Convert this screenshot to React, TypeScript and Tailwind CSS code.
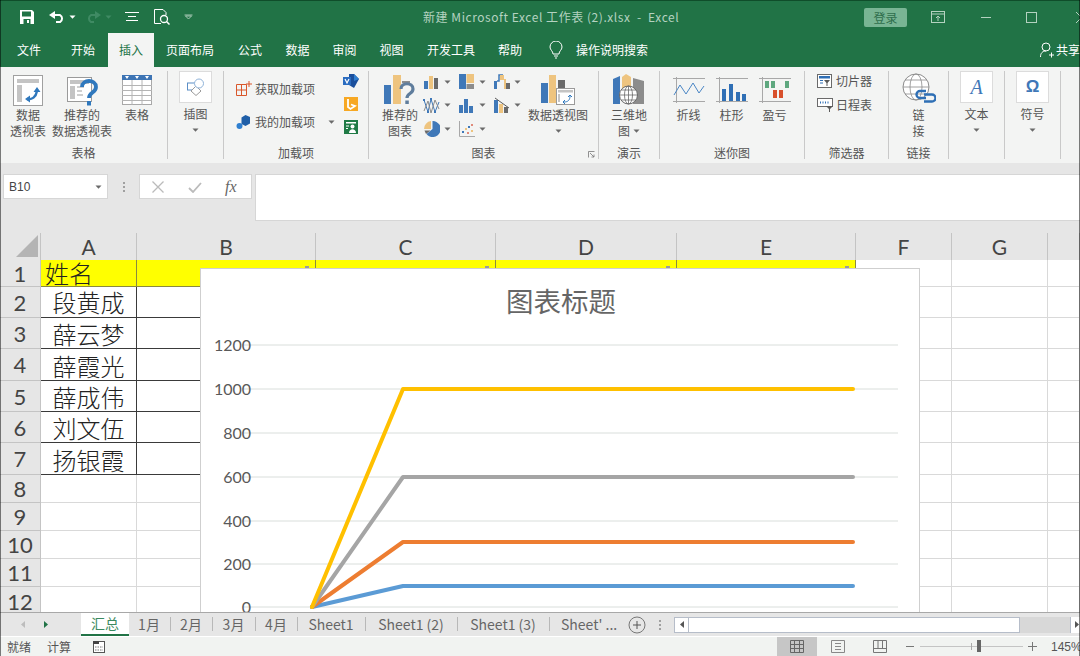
import type { FC, ReactNode } from 'react';

const cjk = "font-['Noto_Sans_CJK_SC','Liberation_Sans',sans-serif]";

const Caret: FC<{ className?: string }> = ({ className = '' }) => (
  <svg width="7" height="4" viewBox="0 0 7 4" className={className}>
    <path d="M0.5 0.5h6L3.5 3.8z" fill="#6a6a6a" />
  </svg>
);

// 功能区图标
const PivotIcon = () => (
  <svg width="30" height="31" viewBox="0 0 30 31">
    <rect x="0.5" y="0.5" width="29" height="30" fill="#fff" stroke="#a0a0a0" />
    <rect x="4" y="4" width="22" height="4" fill="#c4c4c4" />
    <rect x="4" y="10" width="5" height="17" fill="#c4c4c4" />
    <path d="M14 24c5 1 9-2 10-8" fill="none" stroke="#2f78bd" strokeWidth="2.4" />
    <path d="M20.500 17l3.500-5 3.500 5zM17 20.500l-5 3.500 5 3.500z" fill="#2f78bd" />
  </svg>
);
const RecPivotIcon = () => (
  <svg width="31" height="31" viewBox="0 0 31 31">
    <rect x="0.5" y="2.500" width="24" height="24" fill="#fff" stroke="#9a9a9a" />
    <rect x="3" y="5" width="19" height="4" fill="#c4c4c4" />
    <rect x="3" y="11" width="5" height="13" fill="#c4c4c4" />
    <path d="M10 12h7M10 16h5M10 20h6" stroke="#cfcfcf" strokeWidth="2" />
    <path d="M15 12c0-8 14-8 14 0 0 6-7 5-7 11" fill="none" stroke="#2f78bd" strokeWidth="3.800" />
    <rect x="20" y="26" width="4" height="4.500" fill="#2f78bd" />
  </svg>
);
const TableIcon = () => (
  <svg width="30" height="30" viewBox="0 0 30 30">
    <rect x="0.5" y="0.5" width="29" height="29" fill="#fff" stroke="#a8a8a8" />
    <rect x="0" y="0" width="30" height="5" fill="#3d74b4" />
    <path d="M0 10.500h30M0 15.500h30M0 20.500h30M0 25.500h30M10 5v25M20 5v25" stroke="#b4b4b4" />
    <path d="M3 1h4L5 4zM13 1h4l-2 3zM23 1h4l-2 3z" fill="#fff" />
  </svg>
);
const IllustrationIcon = () => (
  <svg width="18" height="18" viewBox="0 0 18 18">
    <rect x="0.5" y="5" width="8" height="7" fill="none" stroke="#5b8ec6" />
    <path d="M9 8l5 5-5 4.500-5-4.500z" fill="#fff" stroke="#9a9a9a" />
    <circle cx="12" cy="5.500" r="4.500" fill="#fff" stroke="#8fb3d9" />
  </svg>
);
const GetAddinIcon = () => (
  <svg width="16" height="16" viewBox="0 0 16 16">
    <path d="M0.5 3.500h10v11h-10zM0.5 9h10M5.500 3.500v11" fill="none" stroke="#d9572b" />
    <path d="M13 0v6M10 3h6" stroke="#d9572b" />
  </svg>
);
const MyAddinIcon = () => (
  <svg width="15" height="15" viewBox="0 0 15 15">
    <path d="M5.500 2.500l4-2.500 4.500 2v6.500l-4.500 2.500-4-2z" fill="#1f5fa8" />
    <circle cx="3.500" cy="11" r="3" fill="#2f7fd0" />
  </svg>
);
const VisioIcon = () => (
  <svg width="16" height="14" viewBox="0 0 16 14">
    <path d="M6 0h5l5 5-5 9-5-3z" fill="#1b4f9c" />
    <path d="M11 0l5 5-5 2z" fill="#2f7fd0" />
    <rect x="0" y="3" width="8" height="8" fill="#2a6cc0" />
    <path d="M2 5l2 4 2-4" fill="none" stroke="#fff" strokeWidth="1.200" />
  </svg>
);
const BingIcon = () => (
  <svg width="14" height="14" viewBox="0 0 14 14">
    <rect width="14" height="14" fill="#f7a823" />
    <path d="M4 2v8l2.500 2 4.500-3-4-1.500" fill="none" stroke="#fff" strokeWidth="1.800" />
  </svg>
);
const PeopleIcon = () => (
  <svg width="14" height="14" viewBox="0 0 14 14">
    <rect width="14" height="14" fill="#1f7a45" />
    <rect x="2" y="2" width="10" height="1.500" fill="#fff" />
    <circle cx="8.500" cy="6.500" r="2" fill="#fff" />
    <path d="M5 13c0-5 7-5 7 0z" fill="#fff" />
    <path d="M2 6h3M2 8.500h2" stroke="#fff" />
  </svg>
);
const RecChartIcon = () => (
  <svg width="32" height="32" viewBox="0 0 32 32">
    <rect x="0" y="11" width="7" height="19" fill="#3f78b8" />
    <rect x="9" y="1" width="8" height="29" fill="#eec47f" />
    <rect x="18" y="7" width="8" height="2" fill="#8c8c8c" />
    <path d="M17 15c0-7 12-7 12 0 0 5-6 4-6 9" fill="none" stroke="#5f7d9c" strokeWidth="3.200" />
    <rect x="21.300" y="26.500" width="3.500" height="3.500" fill="#5f7d9c" />
  </svg>
);
const MiniBar: FC<{ bars: [string, number][] }> = ({ bars }) => (
  <svg width="15" height="15" viewBox="0 0 15 15">
    {bars.map(([c, v], i) => (
      <rect key={i} x={i * 5} y={15 - v} width="4" height={v} fill={c} />
    ))}
  </svg>
);
const TreemapIcon = () => (
  <svg width="15" height="15" viewBox="0 0 15 15">
    <rect width="7" height="15" fill="#3f78b8" />
    <rect x="7.500" width="7.500" height="9" fill="#eec47f" />
    <rect x="7.500" y="10" width="7.500" height="5" fill="#8c8c8c" />
  </svg>
);
const WaterfallIcon = () => (
  <svg width="16" height="15" viewBox="0 0 16 15">
    <rect x="0" y="7" width="3" height="8" fill="#3f78b8" />
    <path d="M3 7h2V1h4" fill="none" stroke="#3f78b8" strokeWidth="1.500" />
    <rect x="6" y="1" width="4" height="5" fill="#eec47f" />
    <rect x="10" y="5" width="2" height="10" fill="#eec47f" />
    <rect x="12" y="9" width="4" height="6" fill="#6a6a6a" />
  </svg>
);
const ScatterLines = () => (
  <svg width="17" height="17" viewBox="0 0 17 17">
    <path d="M1 3l4 12 3-13 4 13 4-10" fill="none" stroke="#3f78b8" />
    <path d="M1 14l4-10 3 12 4-13 4 9" fill="none" stroke="#8c8c8c" />
    <path d="M0 2h2v2H0zM7 1h2v2H7zM4 14h2v2H4zM11 14h2v2h-2z" fill="#3f78b8" />
  </svg>
);
const ParetoIcon = () => (
  <svg width="16" height="16" viewBox="0 0 16 16">
    <rect x="0" y="3" width="4" height="13" fill="#3f78b8" />
    <rect x="5" y="7" width="4" height="9" fill="#eec47f" />
    <rect x="10" y="10" width="4" height="6" fill="#6a6a6a" />
    <path d="M1 1l7 5 7 5" fill="none" stroke="#5a5a5a" />
  </svg>
);
const PieIcon = () => (
  <svg width="16" height="16" viewBox="0 0 16 16">
    <path d="M8.500 0a8 8 0 1 1-6 13l6-5z" fill="#3f78b8" />
    <path d="M7 0a8 8 0 0 0-7 8h7z" fill="#eec47f" />
    <path d="M0.500 9.500h6l-4.500 3.500z" fill="#6a6a6a" />
  </svg>
);
const ScatterIcon = () => (
  <svg width="16" height="16" viewBox="0 0 16 16">
    <path d="M0.500 0v15.500H16" fill="none" stroke="#a8a8a8" />
    <path d="M3 10h2v2H3zM9 5h2v2H9z" fill="#3f78b8" />
    <path d="M6 7h2v2H6zM12 9h2v2h-2z" fill="#eec47f" />
    <path d="M12 3h2v2h-2zM8 11h2v2H8z" fill="#e08a7a" />
  </svg>
);
const PivotChartIcon = () => (
  <svg width="34" height="32" viewBox="0 0 34 32">
    <rect x="0" y="9" width="7" height="20" fill="#3f78b8" />
    <rect x="8" y="1" width="7" height="28" fill="#eec47f" />
    <rect x="17" y="6" width="7" height="10" fill="#6a6a6a" />
    <rect x="15.500" y="14.500" width="18" height="16" fill="#fff" stroke="#9a9a9a" />
    <rect x="17" y="16" width="15" height="2.500" fill="#c4c4c4" />
    <path d="M18 20v8" stroke="#c4c4c4" strokeWidth="2" />
    <path d="M23 28c4 0 6-2 6-6M27 23l2-2 2 2M24 26l-2 2 2 2" fill="none" stroke="#2f78bd" />
  </svg>
);
const MapIcon = () => (
  <svg width="32" height="32" viewBox="0 0 32 32">
    <path d="M0 5l7-3v28H0z" fill="#3f78b8" />
    <path d="M9 3l4-3 5 3v12H9z" fill="#eec47f" />
    <path d="M20 4l11 3v23H20z" fill="#8c8c8c" />
    <circle cx="15.500" cy="21" r="9" fill="#fff" stroke="#6a6a6a" />
    <path d="M6.500 21h18M15.500 12v18M8.500 16h14M8.500 26h14" stroke="#6a6a6a" strokeWidth="0.8" />
    <ellipse cx="15.500" cy="21" rx="4" ry="9" fill="none" stroke="#6a6a6a" strokeWidth="0.8" />
  </svg>
);
const Spark: FC<{ children: ReactNode }> = ({ children }) => (
  <svg width="32" height="26" viewBox="0 0 32 26">
    <path d="M0 1.500h32M0 24.500h32M3.500 0v26" stroke="#a8a8a8" />
    {children}
  </svg>
);
const SlicerIcon = () => (
  <svg width="15" height="14" viewBox="0 0 15 14">
    <rect x="0.5" y="0.5" width="14" height="13" fill="#fff" stroke="#6a6a6a" />
    <rect x="2" y="2" width="11" height="2.500" fill="#2f6fb5" />
    <path d="M3 6.500h3M3 9h3" stroke="#2f6fb5" />
    <path d="M7 6h6l-2.500 3v3h-1V9z" fill="#5a5a5a" />
  </svg>
);
const TimelineIcon = () => (
  <svg width="17" height="14" viewBox="0 0 17 14">
    <rect x="0.5" y="0.5" width="15" height="8" fill="#fff" stroke="#6a6a6a" />
    <path d="M3 4.500h1M5.500 4.500h1M8 4.500h1M10.500 4.500h1" stroke="#2f6fb5" strokeWidth="2" />
    <path d="M9 8h7l-3 3v3h-1v-3z" fill="#5a5a5a" />
  </svg>
);
const LinkIcon = () => (
  <svg width="34" height="34" viewBox="0 0 34 34">
    <circle cx="14" cy="14" r="13" fill="#fff" stroke="#8c8c8c" />
    <ellipse cx="14" cy="14" rx="6" ry="13" fill="none" stroke="#8c8c8c" strokeWidth="0.8" />
    <path d="M1 14h26M3 7h22M3 21h22" stroke="#8c8c8c" strokeWidth="0.8" />
    <path d="M24 25h-6a3.500 3.500 0 0 1 0-7h6M22 21.500h8a3.500 3.500 0 0 1 0 7h-8" fill="none" stroke="#2f6fb5" strokeWidth="2.400" />
  </svg>
);

const Sep = () => <div className="w-px h-[88px] mt-[4px] bg-[#c9c9c9] shrink-0" />;

const Group: FC<{ w: number; label?: string; children: ReactNode }> = ({ w, label, children }) => (
  <div className="relative flex flex-col shrink-0 h-full" style={{ width: w }}>
    <div className="flex flex-1 min-h-0">{children}</div>
    <div className="h-[19px] text-center leading-[17px] text-[12px] text-[#555]">{label}</div>
  </div>
);

const Big: FC<{ w: number; icon: ReactNode; lines: string[]; caret?: boolean; boxed?: boolean }> = ({
  w,
  icon,
  lines,
  caret,
  boxed,
}) => (
  <div className="flex flex-col items-center shrink-0" style={{ width: w }}>
    {boxed ? (
      <div className="w-[33px] h-[32px] mt-[4px] bg-white border border-[#dcdcdc] flex items-center justify-center">{icon}</div>
    ) : (
      <div className="h-[34px] mt-[6px] flex items-center justify-center">{icon}</div>
    )}
    <div className={boxed ? 'mt-[3px]' : ''}>
      {lines.map((l) => (
        <div key={l} className="text-[12px] leading-[16px] text-[#555] text-center whitespace-nowrap">
          {l}
        </div>
      ))}
    </div>
    {caret && <Caret className="mt-[6px]" />}
  </div>
);

const ChartBtn: FC<{ icon: ReactNode }> = ({ icon }) => (
  <div className="flex items-center w-[35px] h-[23.5px] gap-[4px]">
    <div className="w-[17px] flex justify-center">{icon}</div>
    <Caret />
  </div>
);

const Ribbon = () => (
  <div className={`flex h-[96px] bg-[#f3f4f3] shrink-0 ${cjk}`}>
    <Group w={167} label="表格">
      <div className="pl-[5px] flex">
        <Big w={46} icon={<PivotIcon />} lines={['数据', '透视表']} />
        <Big w={62} icon={<RecPivotIcon />} lines={['推荐的', '数据透视表']} />
        <Big w={48} icon={<TableIcon />} lines={['表格']} />
      </div>
    </Group>
    <Sep />
    <Group w={55}>
      <Big w={55} boxed icon={<IllustrationIcon />} lines={['插图']} caret />
    </Group>
    <Sep />
    <Group w={144} label="加载项">
      <div className="pl-[12px] pt-[12px] w-[117px] shrink-0">
        <div className="flex items-center gap-[3px] h-[20px] whitespace-nowrap text-[12px] text-[#555]">
          <GetAddinIcon />
          获取加载项
        </div>
        <div className="flex items-center gap-[4px] h-[20px] mt-[13px] whitespace-nowrap text-[12px] text-[#555]">
          <MyAddinIcon />
          我的加载项
          <Caret className="ml-[9px]" />
        </div>
      </div>
      <div className="pl-[2px] pt-[7px] flex flex-col gap-[9px] items-center">
        <VisioIcon />
        <BingIcon />
        <PeopleIcon />
      </div>
    </Group>
    <Sep />
    <Group w={229} label="图表">
      <div className="pl-[8px]">
        <Big w={46} icon={<RecChartIcon />} lines={['推荐的', '图表']} />
      </div>
      <div className="grid grid-cols-3 mt-[3px] h-fit w-[105px] shrink-0">
        <ChartBtn icon={<MiniBar bars={[['#3f78b8', 8], ['#eec47f', 13], ['#6a6a6a', 11]]} />} />
        <ChartBtn icon={<TreemapIcon />} />
        <ChartBtn icon={<WaterfallIcon />} />
        <ChartBtn icon={<ScatterLines />} />
        <ChartBtn icon={<MiniBar bars={[['#3f78b8', 8], ['#3f78b8', 14], ['#3f78b8', 7]]} />} />
        <ChartBtn icon={<ParetoIcon />} />
        <ChartBtn icon={<PieIcon />} />
        <ChartBtn icon={<ScatterIcon />} />
      </div>
      <Big w={60} icon={<PivotChartIcon />} lines={['数据透视图']} caret />
      <svg width="7" height="7" viewBox="0 0 7 7" className="absolute right-[3px] bottom-[5px]">
        <path d="M0.500 6.500V0.500h6M2 2l4 4M6 3.500V6H3.500" fill="none" stroke="#777" strokeWidth="0.8" />
      </svg>
    </Group>
    <Sep />
    <Group w={60} label="演示">
      <div className="flex flex-col items-center w-full">
        <div className="h-[34px] mt-[6px] flex items-center justify-center">
          <MapIcon />
        </div>
        <div className="text-[12px] leading-[16px] text-[#555]">三维地</div>
        <div className="flex items-center gap-[3px] text-[12px] leading-[16px] text-[#555]">
          图 <Caret />
        </div>
      </div>
    </Group>
    <Sep />
    <Group w={144} label="迷你图">
      <div className="flex pl-[7px]">
        <Big
          w={43}
          icon={
            <Spark>
              <path d="M1 18l6-10 6 9 7-11 6 10 5-7" fill="none" stroke="#4a86c5" />
            </Spark>
          }
          lines={['折线']}
        />
        <Big
          w={43}
          icon={
            <Spark>
              <path d="M6 12h4v12H6zM13 7h4v17h-4zM20 15h4v9h-4zM26 17h4v7h-4z" fill="#2f6fb5" />
            </Spark>
          }
          lines={['柱形']}
        />
        <Big
          w={43}
          icon={
            <Spark>
              <path d="M6 4h4v7H6zM12 4h4v7h-4zM26 4h4v7h-4z" fill="#5ea77e" />
              <path d="M14 13h4v8h-4zM20 13h4v8h-4z" fill="#d8502c" />
            </Spark>
          }
          lines={['盈亏']}
        />
      </div>
    </Group>
    <Sep />
    <Group w={83} label="筛选器">
      <div className="pl-[12px] pt-[5px]">
        <div className="flex items-center gap-[4px] h-[18px] text-[12px] text-[#555] whitespace-nowrap">
          <SlicerIcon />
          切片器
        </div>
        <div className="flex items-center gap-[2px] h-[18px] mt-[6px] text-[12px] text-[#555] whitespace-nowrap">
          <TimelineIcon />
          日程表
        </div>
      </div>
    </Group>
    <Sep />
    <Group w={59} label="链接">
      <Big w={59} icon={<LinkIcon />} lines={['链', '接']} />
    </Group>
    <Sep />
    <Group w={55}>
      <Big
        w={55}
        boxed
        icon={<span className="font-['Liberation_Serif',serif] italic text-[20px] text-[#3f78b8]">A</span>}
        lines={['文本']}
        caret
      />
    </Group>
    <Sep />
    <Group w={55}>
      <Big
        w={55}
        boxed
        icon={<span className="font-['Liberation_Sans',sans-serif] font-bold text-[17px] text-[#3f78b8]">Ω</span>}
        lines={['符号']}
        caret
      />
    </Group>
    <Sep />
  </div>
);

const TitleBar = () => (
  <div className="flex items-center h-[33px] bg-[#217346] border-t border-[#0f4d2a] shrink-0">
    <div className="flex items-center w-[423px] shrink-0 pl-[20px]">
      <svg width="14" height="14" viewBox="0 0 14 14">
        <path d="M0 0h12l2 2v12H0z" fill="#fff" />
        <rect x="2" y="1.500" width="9" height="5" fill="#217346" />
        <rect x="3.500" y="9" width="7" height="5" fill="#217346" />
        <rect x="7" y="10" width="2" height="3" fill="#fff" />
      </svg>
      <svg width="16" height="12" viewBox="0 0 16 12" className="ml-[15px]">
        <path d="M4 4h7a4 4 0 0 1 0 7H7" fill="none" stroke="#fff" strokeWidth="2" />
        <path d="M6 0v8L0 4z" fill="#fff" />
      </svg>
      <Caret className="ml-[4px] [&_path]:fill-white" />
      <svg width="16" height="12" viewBox="0 0 16 12" className="ml-[9px]">
        <path d="M12 4H6a4 4 0 0 0 0 7h3" fill="none" stroke="#3f8a63" strokeWidth="2" />
        <path d="M10 0v8l6-4z" fill="#3f8a63" />
      </svg>
      <Caret className="ml-[4px] [&_path]:fill-[#3f8a63]" />
      <svg width="14" height="10" viewBox="0 0 14 10" className="ml-[13px]">
        <path d="M0 0.500h14M3 4.500h8M1 8.500h12" stroke="#fff" />
      </svg>
      <svg width="16" height="16" viewBox="0 0 16 16" className="ml-[15px]">
        <path d="M9 0.500H0.500v14H7M9 0.500l3 3V6" fill="none" stroke="#fff" />
        <circle cx="10" cy="10" r="3.500" fill="none" stroke="#fff" strokeWidth="1.300" />
        <path d="M12.500 12.500l3 3" stroke="#fff" strokeWidth="1.500" />
      </svg>
      <svg width="9" height="6" viewBox="0 0 9 6" className="ml-[14px]">
        <path d="M0.500 1h8M1.500 2l3 3 3-3z" fill="none" stroke="#a5c7b3" />
      </svg>
    </div>
    <div className={`text-[12px] text-[#b4d2c0] tracking-[0.55px] whitespace-pre ${cjk}`}>新建 Microsoft Excel 工作表 (2).xlsx  -  Excel</div>
    <div className="flex-1" />
    <div className={`w-[43px] h-[19px] rounded-[2px] bg-[#79b594] text-[#2f6e4c] text-[12px] leading-[19px] text-center ${cjk}`}>登录</div>
    <svg width="14" height="12" viewBox="0 0 14 12" className="ml-[24px]">
      <rect x="0.500" y="0.500" width="13" height="11" fill="none" stroke="#b4d2c0" />
      <path d="M0 3h14M7 10V5M5 7l2-2 2 2" fill="none" stroke="#b4d2c0" />
    </svg>
    <div className="w-[10px] h-px bg-[#b4d2c0] ml-[36px]" />
    <div className="w-[11px] h-[11px] border border-[#b4d2c0] ml-[35px]" />
    <svg width="11" height="11" viewBox="0 0 11 11" className="ml-[39px] mr-[-7px] shrink-0">
      <path d="M0 0l11 11M0 11L11 0" stroke="#b4d2c0" fill="none" />
    </svg>
  </div>
);

const tabs: [string, number, string?][] = [
  ['文件', 48],
  ['开始', 55, 'pl-[5px]'],
  ['插入', 46],
  ['页面布局', 72],
  ['公式', 48],
  ['数据', 47],
  ['审阅', 47],
  ['视图', 47],
  ['开发工具', 72],
  ['帮助', 46],
];

const TabBar = () => (
  <div className={`flex items-stretch h-[34px] bg-[#217346] shrink-0 text-[12px] ${cjk}`}>
    <div className="w-[5px]" />
    {tabs.map(([t, w, extra]) => (
      <div
        key={t}
        style={{ width: w }}
        className={
          t === '插入'
            ? 'bg-[#f3f4f3] text-[#217346] flex items-center justify-center'
            : `text-white flex items-center justify-center ${extra ?? ''}`
        }
      >
        {t}
      </div>
    ))}
    <svg width="14" height="18" viewBox="0 0 14 18" className="ml-[16px] self-center">
      <path d="M4 13c0-3-3-4-3-7a6 6 0 0 1 12 0c0 3-3 4-3 7zM5 15h4M6 17h2" fill="none" stroke="#fff" />
    </svg>
    <div className="ml-[13px] text-white self-center whitespace-nowrap">操作说明搜索</div>
    <div className="flex-1" />
    <div className="flex items-center gap-[2px] text-white whitespace-nowrap">
      <svg width="14" height="16" viewBox="0 0 14 16">
        <circle cx="6" cy="5" r="4" fill="none" stroke="#fff" />
        <path d="M0.500 15c0-4 2-6 5.500-6M9 13h5M11.500 10.500v5" fill="none" stroke="#fff" />
      </svg>
      <span className="w-[24px] overflow-hidden">共享</span>
    </div>
  </div>
);

const FormulaBar = () => (
  <div className="flex h-[70px] bg-[#e6e6e6] shrink-0 pt-[11px] pl-[3px] font-['Liberation_Sans',sans-serif]">
    <div className="flex items-center justify-between w-[105px] h-[25px] bg-white border border-[#d6d6d6] px-[5px] text-[12px] text-[#444]">
      B10
      <Caret />
    </div>
    <div className="w-[31px] h-[25px] flex flex-col items-center justify-center gap-[2px]">
      <i className="w-[2px] h-[2px] bg-[#a0a0a0]" />
      <i className="w-[2px] h-[2px] bg-[#a0a0a0]" />
      <i className="w-[2px] h-[2px] bg-[#a0a0a0]" />
    </div>
    <div className="flex items-center w-[113px] h-[25px] bg-white border border-[#d6d6d6] pl-[12px]">
      <svg width="12" height="12" viewBox="0 0 12 12">
        <path d="M0.500 0.500l11 11M11.500 0.500l-11 11" stroke="#bbb" strokeWidth="1.300" />
      </svg>
      <svg width="14" height="12" viewBox="0 0 14 12" className="ml-[24px]">
        <path d="M1 7l4 4 8-9" fill="none" stroke="#bbb" strokeWidth="1.800" />
      </svg>
      <span className="ml-[23px] font-['Liberation_Serif',serif] italic text-[16px] text-[#666]">fx</span>
    </div>
    <div className="w-[3px]" />
    <div className="flex-1 h-[47px] bg-white border border-[#d6d6d6] border-r-0" />
  </div>
);

const rowCount = 12;
const names = ['姓名', '段黄成', '薛云梦', '薛霞光', '薛成伟', '刘文伍', '扬银霞'];
const colLetters = ['A', 'B', 'C', 'D', 'E', 'F', 'G', ''];

const Sheet = () => (
  <div className="grid grid-cols-[41px_96px_179px_180px_181px_179px_96px_96px_32px] grid-rows-[27px_27px_31px_31px_32px_31px_31px_32px_28px_28px_28px_28px_30px] bg-white font-['Lato',sans-serif]">
    <div className="bg-[#e6e6e6] border-r border-[#c4c4c4] flex items-end justify-end pr-[2px] pb-[3px]">
      <svg width="22" height="22" viewBox="0 0 22 22">
        <path d="M22 0v22H0z" fill="#b4b4b4" />
      </svg>
    </div>
    {colLetters.map((c, i) => (
      <div
        key={i}
        className="bg-[#e6e6e6] border-r border-[#c4c4c4] flex items-center justify-center text-[21px] text-[#444]"
      >
        {c}
      </div>
    ))}
    {Array.from({ length: rowCount }, (_, r) => (
      <Row key={r} r={r} />
    ))}
  </div>
);

const Row: FC<{ r: number }> = ({ r }) => {
  const top = r < 7;
  const yellow = r === 0;
  return (
    <>
      <div className="bg-[#e6e6e6] border-r border-b border-[#c4c4c4] flex items-center justify-center text-[22px] text-[#444]">
        {r + 1}
      </div>
      {colLetters.map((_, c) => {
        let cls = 'border-r border-b border-[#d9d9d9]';
        if (yellow && c < 5) cls = 'bg-[#ffff00] border-r border-b border-[#8a8a40]';
        if (!yellow && top && c <= 1) cls = 'border-r border-b border-[#3a3a3a]';
        return (
          <div
            key={c}
            className={`relative ${cls} flex items-center text-[24px] leading-none text-[#222] whitespace-nowrap font-light ${cjk} ${
              yellow ? 'pl-[4px]' : r >= 2 ? 'justify-center pt-[2px]' : 'justify-center'
            }`}
          >
            {c === 0 && top ? names[r] : ''}
            {yellow && c >= 1 && c <= 4 && <i className="absolute right-[6px] top-[6px] w-[4px] h-[2px] bg-[#999]" />}
          </div>
        );
      })}
    </>
  );
};

const ChartOverlay = () => {
  const ticks = [
    [1200, 77],
    [1000, 121],
    [800, 165],
    [600, 209],
    [400, 253],
    [200, 296],
    [0, 339],
  ];
  const series: [string, number][] = [
    ['#5b9bd5', 318],
    ['#ed7d31', 274],
    ['#a5a5a5', 209],
    ['#ffc000', 121],
  ];
  return (
    <div className="absolute left-[200px] top-[35px] w-[720px] h-[360px] bg-white border border-[#cfcfcf]">
      <div className={`pt-[12px] pl-[2px] text-center text-[27.500px] leading-[38px] text-[#666] ${cjk}`}>图表标题</div>
      <svg width="720" height="345" viewBox="0 0 720 345" className="absolute -left-px -top-px font-['Lato',sans-serif]">
        {ticks.map(([v, y]) => (
          <g key={v}>
            <line x1="42" x2="698" y1={y} y2={y} stroke="#d9dedb" />
            <text x="51" y={y + 5.500} textAnchor="end" fontSize="16" fill="#595959">
              {v}
            </text>
          </g>
        ))}
        {series.map(([c, y]) => (
          <polyline
            key={c}
            points={`112,339 203,${y} 653,${y}`}
            fill="none"
            stroke={c}
            strokeWidth="4"
            strokeLinecap="round"
            strokeLinejoin="round"
          />
        ))}
      </svg>
    </div>
  );
};

const sheetTabs: [string, number][] = [
  ['1月', 42],
  ['2月', 42],
  ['3月', 43],
  ['4月', 42],
  ['Sheet1', 68],
  ['Sheet1 (2)', 92],
  ['Sheet1 (3)', 92],
];

const SheetTabs = () => (
  <div className={`flex items-stretch h-[24px] bg-[#e6e6e6] border-t border-[#a8a8a8] shrink-0 text-[14px] text-[#666] ${cjk}`}>
    <div className="w-[81px] flex items-center pl-[21px] gap-[19px]">
      <svg width="4" height="7" viewBox="0 0 4 7">
        <path d="M4 0v7L0 3.500z" fill="#bdbdbd" />
      </svg>
      <svg width="4" height="7" viewBox="0 0 4 7">
        <path d="M0 0v7l4-3.500z" fill="#217346" />
      </svg>
    </div>
    <div className="w-[48px] bg-white border-b-2 border-[#217346] text-[#3b8a60] flex items-center justify-center">汇总</div>
    {sheetTabs.map(([t, w]) => (
      <div key={t} style={{ width: w }} className="flex items-center justify-center whitespace-nowrap relative pr-[2px]">
        {t}
        <i className="absolute right-0 top-[4px] h-[14px] w-px bg-[#b8b8b8]" />
      </div>
    ))}
    <div className="w-[79px] pl-[11px] flex items-center whitespace-nowrap">Sheet' ...</div>
    <svg width="18" height="18" viewBox="0 0 18 18" className="self-center ml-[-1px]">
      <circle cx="9" cy="9" r="8" fill="none" stroke="#777" />
      <path d="M5 9h8M9 5v8" stroke="#555" />
    </svg>
    <div className="w-[28px] flex flex-col items-center justify-center gap-[2px]">
      <i className="w-[2px] h-[2px] bg-[#a0a0a0]" />
      <i className="w-[2px] h-[2px] bg-[#a0a0a0]" />
      <i className="w-[2px] h-[2px] bg-[#a0a0a0]" />
    </div>
    <div className="flex flex-1 items-center">
      <div className="w-[15px] h-[16px] bg-white border border-[#b6bdc9] flex items-center justify-center">
        <svg width="4" height="7" viewBox="0 0 4 7">
          <path d="M4 0v7L0 3.500z" fill="#555" />
        </svg>
      </div>
      <div className="w-[331px] h-[16px] bg-white border border-[#b6bdc9] border-l-0" />
      <div className="flex-1 h-[16px] bg-[#d8d8d8]" />
      <div className="w-[10px] h-[16px] bg-white border-l border-[#b6bdc9] flex items-center pl-[4px]">
        <svg width="4" height="7" viewBox="0 0 4 7">
          <path d="M0 0v7l4-3.500z" fill="#555" />
        </svg>
      </div>
    </div>
  </div>
);

const StatusBar = () => (
  <div className={`flex items-center h-[19px] mt-px bg-[#f1f3f1] shrink-0 text-[12px] text-[#555] ${cjk}`}>
    <span className="ml-[7px]">就绪</span>
    <span className="ml-[16px]">计算</span>
    <svg width="12" height="12" viewBox="0 0 12 12" className="ml-[22px]">
      <rect x="0.500" y="0.500" width="11" height="11" fill="#fff" stroke="#555" />
      <rect x="0" y="0" width="6" height="3" fill="#444" />
      <path d="M2 6h8M2 9h8" stroke="#777" strokeDasharray="1.500 1" />
    </svg>
    <div className="flex-1" />
    <div className="w-[40px] h-full bg-[#c6c6c6] flex items-center justify-center">
      <svg width="14" height="13" viewBox="0 0 14 13">
        <path d="M0.500 0.500h13v12h-13zM0.500 4.500h13M0.500 8.500h13M4.500 0.500v12M9.500 0.500v12" fill="none" stroke="#666" />
      </svg>
    </div>
    <div className="w-[42px] flex justify-center">
      <svg width="14" height="13" viewBox="0 0 14 13">
        <path d="M0.500 0.500h13v12h-13z" fill="none" stroke="#888" />
        <path d="M4 3.500h6M4 6.500h6M4 9.500h6" stroke="#888" />
      </svg>
    </div>
    <div className="w-[42px] flex justify-center">
      <svg width="14" height="13" viewBox="0 0 14 13">
        <path d="M0.500 0.500v12h13v-12M0.500 8.500h13M5 0.500v8M9.500 0.500v8M0.500 0.500h13" fill="none" stroke="#777" />
      </svg>
    </div>
    <div className="ml-[5px] w-[8px] h-px bg-[#777]" />
    <div className="relative ml-[6px] w-[103px] h-px bg-[#c4c4c4]">
      <i className="absolute left-[51px] top-[-3px] w-px h-[7px] bg-[#aaa]" />
      <i className="absolute left-[57px] top-[-6px] w-[4px] h-[12px] bg-[#666]" />
    </div>
    <svg width="9" height="9" viewBox="0 0 9 9" className="ml-[5px]">
      <path d="M0 4.500h9M4.500 0v9" stroke="#777" />
    </svg>
    <span className="ml-[14px] w-[29px] whitespace-nowrap font-['Liberation_Sans',sans-serif] text-[#555]">145%</span>
  </div>
);

export default function App() {
  return (
    <div className="relative flex flex-col w-[1080px] h-[656px] overflow-hidden">
      <TitleBar />
      <TabBar />
      <Ribbon />
      <FormulaBar />
      <div className="relative flex-1 min-h-0 overflow-hidden">
        <Sheet />
        <ChartOverlay />
      </div>
      <SheetTabs />
      <StatusBar />
      <i className="absolute inset-y-0 left-0 w-px bg-black/50" />
      <i className="absolute inset-y-0 right-0 w-px bg-black/50" />
    </div>
  );
}
